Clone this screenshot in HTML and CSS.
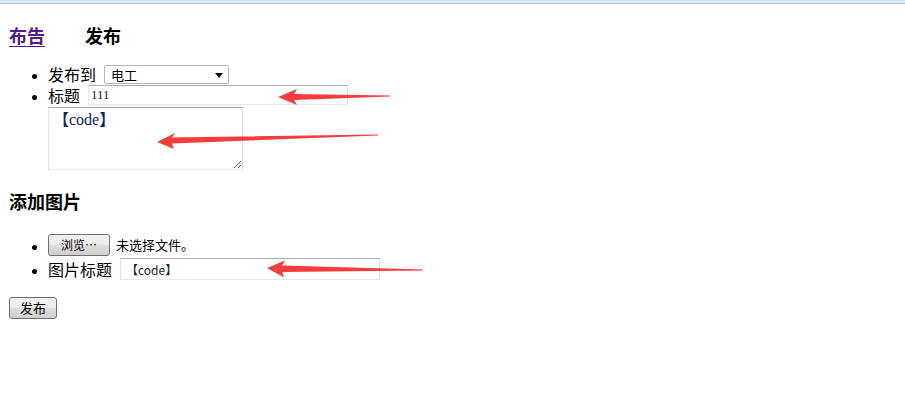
FILE: index.html
```html
<!DOCTYPE html>
<html lang="zh">
<head>
<meta charset="utf-8">
<title>发布</title>
<link rel="stylesheet" href="styles.css">
</head>
<body>
<div class="chrome"></div>
<main class="page">
  <h3 class="tabs"><a href="#" class="tab-link">布告</a><span class="tab-current">发布</span></h3>
  <ul class="fields">
    <li class="row row-select"><span class="label">发布到</span><span class="select"><span class="select-value">电工</span><svg class="select-arrow" width="8" height="5" viewBox="0 0 8 5"><path d="M0 0H8L4 5Z" fill="#000"/></svg></span></li>
    <li class="row row-title"><div class="line"><span class="label">标题</span><input class="text-input title-input" type="text" value="111"></div><textarea class="content">【code】</textarea></li>
  </ul>
  <h3 class="section-title">添加图片</h3>
  <ul class="fields fields-img">
    <li class="row row-img"><button class="browse" type="button">浏览…</button><span class="no-file">未选择文件。</span></li>
    <li class="row row-img"><span class="label">图片标题</span><input class="text-input img-title" type="text" value="【code】"></li>
  </ul>
  <button class="submit" type="button">发布</button>
  <svg class="arrows" width="905" height="411" viewBox="0 0 905 411">
    <polygon fill="#f53d3d" points="278,97 297,89 294,94 390,95.4 390,96.4 294,100 297,105"/>
    <polygon fill="#f53d3d" points="157,142 175,133 172,137.5 378,134.6 378,135.6 172,143.5 174,149"/>
    <polygon fill="#f53d3d" points="267,268 285,260.5 282,265.5 423,269.4 423,270.4 282,272 284,277.5"/>
  </svg>
</main>
</body>
</html>
```
FILE: styles.css
```css
html, body {
  margin: 0;
  padding: 0;
  background: #fff;
}
body {
  font-family: "Noto Sans CJK SC", "Liberation Sans", sans-serif;
  font-size: 16px;
  color: #000;
}
.chrome {
  height: 3px;
  background: #dde8f5;
  border-bottom: 1px solid #a9bcd6;
}
.page {
  display: flow-root;
  position: relative;
  padding: 0 9px;
  height: 407px;
}
.tabs, .section-title {
  font-size: 18px;
  line-height: 26px;
  font-weight: 700;
  margin: 18px 0 0;
}
.tab-link {
  color: #551a8b;
  text-decoration: underline;
  text-underline-offset: 3px;
  margin-right: 40px;
}
.fields {
  margin: 16px 0 0;
  padding-left: 39px;
}
.fields li::marker {
  font-family: "Liberation Sans", sans-serif;
  font-size: 15px;
}
.row {
  line-height: 20px;
}
.row-select {
  height: 21px;
}
.row-select .label,
.row-select .select {
  vertical-align: top;
}
.row-select .select {
  margin-top: 1px;
}
.line {
  display: flex;
  align-items: center;
  height: 20px;
}
.label {
  margin-right: 8px;
}
.select {
  display: inline-flex;
  align-items: center;
  justify-content: space-between;
  box-sizing: border-box;
  width: 125px;
  height: 19px;
  padding: 0 5px 0 6px;
  border: 1px solid #b7b7b7;
  border-radius: 2px;
  font-size: 13px;
  line-height: 17px;
}
.select-arrow {
  margin-top: 1px;
}
.text-input {
  box-sizing: border-box;
  border: 1px solid;
  border-color: #abadb3 #dbdfe6 #e3e9ef #e2e3ea;
  padding: 0 2px;
  margin: 0;
  font-family: "Liberation Serif", "Noto Sans CJK SC", serif;
  font-size: 13px;
  color: #1a2233;
  background: #fff;
  outline: none;
}
.title-input {
  width: 260px;
  height: 20px;
}
.content {
  display: block;
  box-sizing: border-box;
  width: 195px;
  height: 63px;
  margin: 2px 0 0;
  padding: 2px 4px;
  border: 1px solid;
  border-color: #abadb3 #dbdfe6 #e3e9ef #e2e3ea;
  font-family: "Liberation Serif", "Noto Sans CJK SC", serif;
  font-size: 16px;
  line-height: 20px;
  color: #10205a;
  resize: both;
  outline: none;
}
.section-title {
  margin-top: 18px;
}
.fields-img {
  margin-top: 19px;
  margin-bottom: 16px;
}
.row-img {
  height: 24px;
  line-height: 24px;
}
.row-img > * {
  vertical-align: top;
}
.browse, .submit {
  box-sizing: border-box;
  height: 22px;
  border: 1px solid #707070;
  border-radius: 3px;
  background: linear-gradient(#f2f2f2 0%, #ebebeb 50%, #dddddd 51%, #cfcfcf 100%);
  font-family: "Noto Sans CJK SC", sans-serif;
  font-size: 12px;
  line-height: 18px;
  color: #000;
  padding: 0;
}
.browse {
  width: 62px;
  margin-top: 1px;
}
.no-file {
  margin-left: 6px;
  font-size: 13px;
}
.img-title {
  width: 260px;
  height: 22px;
  margin-top: 1px;
  padding-left: 5px;
  font-family: "Noto Sans CJK SC", sans-serif;
  font-size: 12px;
}
.submit {
  display: block;
  width: 48px;
  font-size: 13px;
}
.arrows {
  position: absolute;
  left: 0;
  top: -4px;
  pointer-events: none;
}
```
